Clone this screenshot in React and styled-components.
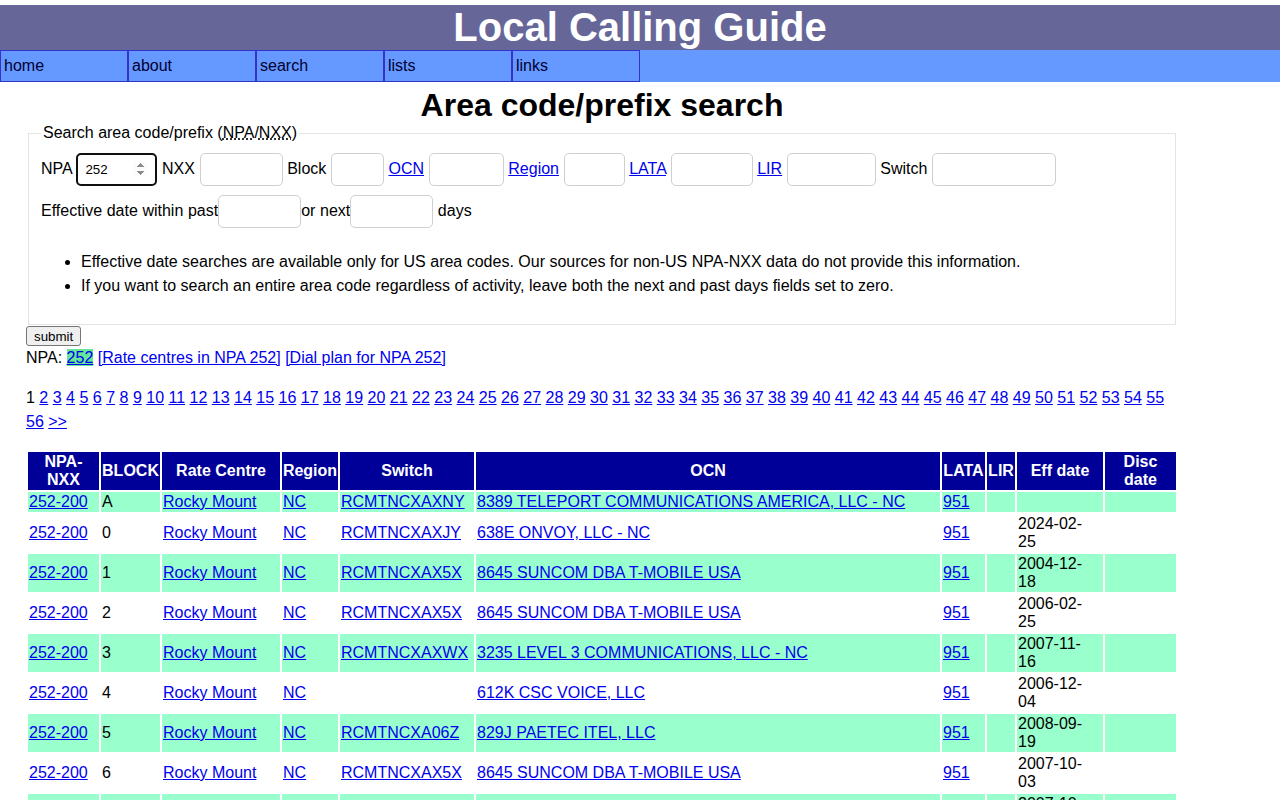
import React from 'react'
import styled, { createGlobalStyle } from 'styled-components'

const GlobalStyle = createGlobalStyle`
  body {
    margin: 0;
    padding-top: 5px;
    font-family: "Liberation Sans", Arial, sans-serif;
    font-size: 16px;
    color: #000;
    background: #fff;
  }
  a { color: #0000ee; }
`

const Banner = styled.header`
  background: #666699;
  height: 45px;
  color: #fff;
  font-size: 40px;
  font-weight: bold;
  line-height: 45px;
  text-align: center;
`

const NavBar = styled.nav`
  display: flex;
  background: #6699ff;
  height: 32px;
`

const NavItem = styled.a`
  box-sizing: border-box;
  width: 128px;
  height: 32px;
  border: 1px solid #3333cc;
  padding: 0 3px;
  line-height: 30px;
  color: #000033;
  text-decoration: none;
`

const Main = styled.main`
  margin-left: 26px;
  width: 1152px;
`

const PageTitle = styled.h1`
  font-size: 32px;
  line-height: 37px;
  text-align: center;
  margin: 5px 0 0;
`

const Fieldset = styled.fieldset`
  margin: 0 2px;
  border: 1px solid #e4e4e4;
  padding: 6px 12px 11px;
`

const Legend = styled.legend`
  padding: 0 2px;
  line-height: 18px;
`

const Abbr = styled.abbr`
  text-decoration: underline dotted;
`

const FormRow = styled.div`
  height: 42px;
  line-height: 42px;
  white-space: nowrap;
  word-spacing: 0.15px;
`

const Field = styled.input`
  box-sizing: border-box;
  width: ${({ $w }) => $w}px;
  height: 33px;
  vertical-align: middle;
  border: 1px solid #cfcfcf;
  border-radius: 5px;
  padding: 0 6px;
  font-family: "Liberation Sans", Arial, sans-serif;
  font-size: 13.33px;
  margin: 0;
  background: #fff;
`

const NumberField = styled(Field)`
  border: 2px solid #101010;
  outline: none;
  padding: 0 7px;
`

const Notes = styled.ul`
  margin: 18px 0 15px;
  padding-left: 40px;
  line-height: 24px;
`

const SubmitButton = styled.button`
  display: block;
  margin-top: 1px;
  height: 20px;
  padding: 0 7px;
  font-family: "Liberation Sans", Arial, sans-serif;
  font-size: 13.33px;
  background: #efefef;
  border: 1px solid #767676;
  border-radius: 3px;
  color: #000;
`

const NpaLine = styled.div`
  padding-top: 1px;
  line-height: 22px;
`

const Highlight = styled.a`
  background: #66e699;
`

const Pager = styled.div`
  margin-top: 17px;
  line-height: 24px;
`

const Table = styled.table`
  margin-top: 16px;
  width: 1152px;
  table-layout: fixed;
  border-spacing: 2px;
`

const Th = styled.th`
  box-sizing: border-box;
  width: ${({ $w }) => $w}px;
  background: #000099;
  color: #fff;
  font-weight: bold;
  padding: 1px 0;
  line-height: 18px;
  text-align: center;
`

const Row = styled.tr`
  background: ${({ $odd }) => ($odd ? '#99ffcc' : 'transparent')};
`

const Td = styled.td`
  padding: 1px 1px;
  line-height: 18px;
  white-space: ${({ $nowrap }) => ($nowrap ? 'nowrap' : 'normal')};
`

const DateTd = styled(Td)`
  padding-right: 12px;
`

const columns = [
  ['npa', <>NPA-<br />NXX</>, 71],
  ['block', 'BLOCK', 59],
  ['rc', 'Rate Centre', 118],
  ['region', 'Region', 56],
  ['switch', 'Switch', 134],
  ['ocn', 'OCN', 464],
  ['lata', 'LATA', 43],
  ['lir', 'LIR', 28],
  ['eff', 'Eff date', 86],
  ['disc', 'Disc date', 71],
]

const rows = [
  ['A', 'RCMTNCXAXNY', '8389 TELEPORT COMMUNICATIONS AMERICA, LLC - NC', ''],
  ['0', 'RCMTNCXAXJY', '638E ONVOY, LLC - NC', '2024-02-25'],
  ['1', 'RCMTNCXAX5X', '8645 SUNCOM DBA T-MOBILE USA', '2004-12-18'],
  ['2', 'RCMTNCXAX5X', '8645 SUNCOM DBA T-MOBILE USA', '2006-02-25'],
  ['3', 'RCMTNCXAXWX', '3235 LEVEL 3 COMMUNICATIONS, LLC - NC', '2007-11-16'],
  ['4', '', '612K CSC VOICE, LLC', '2006-12-04'],
  ['5', 'RCMTNCXA06Z', '829J PAETEC ITEL, LLC', '2008-09-19'],
  ['6', 'RCMTNCXAX5X', '8645 SUNCOM DBA T-MOBILE USA', '2007-10-03'],
  ['7', 'RCMTNCXAX5X', '8645 SUNCOM DBA T-MOBILE USA', '2007-10-16'],
  ['8', 'RCMTNCXAXJY', '638E ONVOY, LLC - NC', '2021-05-12'],
]

const pages = Array.from({ length: 55 }, (_, i) => i + 2)

const App = () => {
  return (
    <>
      <GlobalStyle />
      <Banner>Local Calling Guide</Banner>
      <NavBar>
        {['home', 'about', 'search', 'lists', 'links'].map((n) => (
          <NavItem key={n} href="#">{n}</NavItem>
        ))}
      </NavBar>
      <Main>
        <PageTitle>Area code/prefix search</PageTitle>
        <form onSubmit={(e) => e.preventDefault()}>
          <Fieldset>
            <Legend>
              Search area code/prefix (<Abbr title="Numbering Plan Area">NPA</Abbr>/<Abbr title="Exchange">NXX</Abbr>)
            </Legend>
            <FormRow>
              NPA <NumberField type="number" $w={81} defaultValue="252" autoFocus />{' '}
              NXX <Field $w={83} />{' '}
              Block <Field $w={53} />{' '}
              <a href="#">OCN</a> <Field $w={75} />{' '}
              <a href="#">Region</a> <Field $w={61} />{' '}
              <a href="#">LATA</a> <Field $w={82} />{' '}
              <a href="#">LIR</a> <Field $w={89} />{' '}
              Switch <Field $w={124} />
            </FormRow>
            <FormRow>
              Effective date within past<Field $w={83} />or next<Field $w={83} /> days
            </FormRow>
            <Notes>
              <li>Effective date searches are available only for US area codes. Our sources for non-US NPA-NXX data do not provide this information.</li>
              <li>If you want to search an entire area code regardless of activity, leave both the next and past days fields set to zero.</li>
            </Notes>
          </Fieldset>
          <SubmitButton type="submit">submit</SubmitButton>
        </form>
        <NpaLine>
          NPA: <Highlight href="#">252</Highlight> <a href="#">[Rate centres in NPA 252]</a> <a href="#">[Dial plan for NPA 252]</a>
        </NpaLine>
        <Pager>
          1{' '}
          {pages.map((p) => (
            <React.Fragment key={p}>
              <a href="#">{p}</a>{' '}
            </React.Fragment>
          ))}
          <a href="#">&gt;&gt;</a>
        </Pager>
        <Table>
          <thead>
            <tr>
              {columns.map(([key, label, w]) => (
                <Th key={key} $w={w}>{label}</Th>
              ))}
            </tr>
          </thead>
          <tbody>
            {rows.map(([block, sw, ocn, eff], i) => (
              <Row key={i} $odd={i % 2 === 0}>
                <Td $nowrap><a href="#">252-200</a></Td>
                <Td>{block}</Td>
                <Td $nowrap><a href="#">Rocky Mount</a></Td>
                <Td><a href="#">NC</a></Td>
                <Td>{sw && <a href="#">{sw}</a>}</Td>
                <Td><a href="#">{ocn}</a></Td>
                <Td><a href="#">951</a></Td>
                <Td></Td>
                <DateTd>{eff}</DateTd>
                <Td></Td>
              </Row>
            ))}
          </tbody>
        </Table>
      </Main>
    </>
  )
}

export default App
